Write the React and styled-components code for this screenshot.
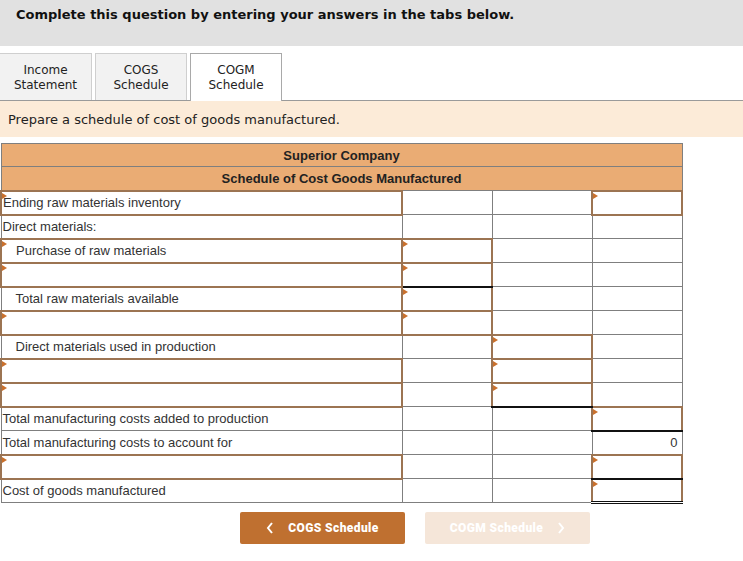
import { createGlobalStyle, styled, css } from "styled-components";

const GlobalStyle = createGlobalStyle`
  body {
    margin: 0;
    background: #ffffff;
    font-family: "DejaVu Sans", Verdana, sans-serif;
  }
`;

//Header band
const TopBar = styled.div`
  height: 46px;
  background: #e1e1e1;
  padding: 7px 0 0 16px;
  box-sizing: border-box;
  font-weight: bold;
  font-size: 13px;
  color: #111;
`;

const TabRow = styled.div`
  display: flex;
  align-items: flex-end;
  gap: 3px;
  margin-top: 7px;
  border-bottom: 1px solid #9a9a9a;
`;

const Tab = styled.div`
  width: 92px;
  box-sizing: border-box;
  display: flex;
  flex-direction: column;
  justify-content: center;
  align-items: center;
  padding-top: 1px;
  font-size: 12px;
  line-height: 15px;
  color: #222;
  background: ${(p) => (p.$active ? "#ffffff" : "#f2f2f2")};
  border: 1px solid ${(p) => (p.$active ? "#a9a9a9" : "#cfcfcf")};
  border-bottom: none;
  margin-bottom: ${(p) => (p.$active ? "-1px" : "0")};
  height: ${(p) => (p.$active ? "48px" : "47px")};
  &:first-child {
    border-left: none;
  }
`;

const Instruction = styled.div`
  height: 36px;
  background: #fcebd8;
  display: flex;
  align-items: center;
  padding-left: 8px;
  font-size: 13px;
  color: #222;
`;

const Sheet = styled.table`
  margin-top: 6px;
  border-collapse: collapse;
  table-layout: fixed;
  font-family: "Liberation Sans", Arial, sans-serif;
  font-size: 13px;
  color: #333;
`;

const Row = styled.tr`
  height: ${(p) => p.$h || 24}px;
`;

const HeadCell = styled.th`
  background: #eaac74;
  border: 1px solid #7f7f7f;
  padding: 0;
  font-weight: bold;
  color: #222;
  text-align: center;
`;

const Cell = styled.td`
  border: 1px solid #7f7f7f;
  padding: 0 4px 0 0;
  line-height: 15px;
  text-align: ${(p) => (p.$num ? "right" : "left")};
  padding-left: ${(p) => (p.$indent ? "14px" : "1px")};
  white-space: nowrap;
  ${(p) =>
    p.$in &&
    css`
      border: 2px solid #9c7452;
      position: relative;
      &::before {
        content: "";
        position: absolute;
        top: 1px;
        left: 0;
        border-left: 5px solid #c9702c;
        border-top: 3px solid transparent;
        border-bottom: 3px solid transparent;
      }
    `}
  ${(p) => p.$ul && "border-bottom: 2px solid #111;"}
  ${(p) => p.$dbl && "border-bottom: 3px double #111;"}
`;

const ButtonRow = styled.div`
  display: flex;
  gap: 20px;
  margin: 8px 0 0 240px;
`;

const NavButton = styled.button`
  width: 165px;
  height: 32px;
  border: none;
  border-radius: 2px;
  display: flex;
  align-items: center;
  justify-content: center;
  gap: 14px;
  font-family: Roboto, "Liberation Sans", sans-serif;
  font-weight: 900;
  font-size: 12px;
  letter-spacing: 0.4px;
  color: #ffffff;
  background: ${(p) => (p.$disabled ? "#f5e6d9" : "#bf7030")};
`;

const Chevron = ({ left }) => (
  <svg width="8" height="12" viewBox="0 0 8 12">
    <path
      d={left ? "M6 1 L2 6 L6 11" : "M2 1 L6 6 L2 11"}
      fill="none"
      stroke="#ffffff"
      strokeWidth="2"
    />
  </svg>
);

const rows = [
  { text: "Ending raw materials inventory", c: ["in", "", "", "in"] },
  { text: "Direct materials:", c: ["", "", "", ""] },
  { text: "Purchase of raw materials", indent: true, c: ["in", "in", "", ""] },
  { c: ["in", "in ul", "", ""] },
  { text: "Total raw materials available", indent: true, c: ["", "in", "", ""] },
  { c: ["in", "in", "", ""] },
  { text: "Direct materials used in production", indent: true, c: ["", "", "in", ""] },
  { c: ["in", "", "in", ""] },
  { c: ["in", "", "in ul", ""] },
  { text: "Total manufacturing costs added to production", c: ["", "", "", "in ul"] },
  { text: "Total manufacturing costs to account for", c: ["", "", "", ""], value: "0" },
  { c: ["in", "", "", "in ul"] },
  { text: "Cost of goods manufactured", c: ["", "", "", "in dbl"] },
];

const widths = [401, 90, 100, 90];

const App = () => {
  return (
    <div>
      <GlobalStyle />
      <TopBar>Complete this question by entering your answers in the tabs below.</TopBar>

      <TabRow>
        <Tab>
          <span>Income</span>
          <span>Statement</span>
        </Tab>
        <Tab>
          <span>COGS</span>
          <span>Schedule</span>
        </Tab>
        <Tab $active>
          <span>COGM</span>
          <span>Schedule</span>
        </Tab>
      </TabRow>

      <Instruction>Prepare a schedule of cost of goods manufactured.</Instruction>

      <Sheet>
        <colgroup>
          {widths.map((w, i) => (
            <col key={i} style={{ width: w }} />
          ))}
        </colgroup>
        <thead>
          <Row $h={23}>
            <HeadCell colSpan={4}>Superior Company</HeadCell>
          </Row>
          <Row $h={24}>
            <HeadCell colSpan={4}>Schedule of Cost Goods Manufactured</HeadCell>
          </Row>
        </thead>
        <tbody>
          {rows.map((r, i) => (
            <Row key={i}>
              {r.c.map((f, j) => (
                <Cell
                  key={j}
                  $in={f.includes("in")}
                  $ul={f.includes("ul")}
                  $dbl={f.includes("dbl")}
                  $indent={j === 0 && r.indent}
                  $num={j === 3}
                >
                  {j === 0 ? r.text : j === 3 ? r.value : null}
                </Cell>
              ))}
            </Row>
          ))}
        </tbody>
      </Sheet>

      <ButtonRow>
        <NavButton>
          <Chevron left />
          COGS Schedule
        </NavButton>
        <NavButton $disabled>
          COGM Schedule
          <Chevron />
        </NavButton>
      </ButtonRow>
    </div>
  );
};

export default App;
